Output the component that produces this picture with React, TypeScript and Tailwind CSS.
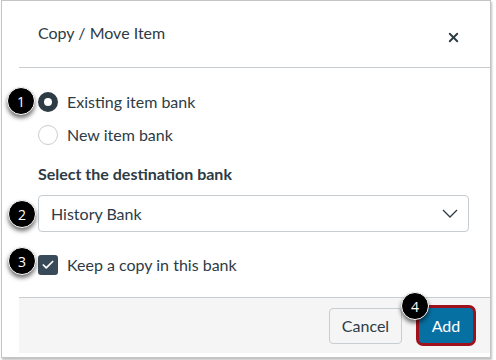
import { Check, X } from 'lucide-react'

function Badge({ n, className }: { n: number; className: string }) {
  return (
    <div
      className={`absolute w-[28px] h-[28px] rounded-full bg-black border border-white text-white text-[14px] flex items-center justify-center shadow-[0_3px_4px_rgba(0,0,0,0.55)] font-['Open_Sans',sans-serif] ${className}`}
    >
      {n}
    </div>
  )
}

function Radio({ checked, label }: { checked?: boolean; label: string }) {
  return (
    <label className="h-[33px] flex items-center gap-[9px]">
      <span
        className={
          checked
            ? 'w-[20px] h-[20px] rounded-full border-[6px] border-[#2d3b45] bg-white'
            : 'w-[20px] h-[20px] rounded-full border border-[#c7cdd1] bg-white'
        }
      />
      <span className="text-[16px]">{label}</span>
    </label>
  )
}

export default function App() {
  return (
    <div className="w-[496px] h-[360px] bg-white font-['Lato',sans-serif] text-[#2d3b45]">
      <div className="relative ml-[1px] w-[490px] h-[358px] border border-[#c4c4c4] shadow-[1px_2px_2px_rgba(0,0,0,0.25)] bg-white pl-[17px] flex flex-col">
        <div className="h-[67px] border-b border-[#c7cdd1] flex items-center justify-between pl-[19px] pr-[29px]">
          <h2 className="text-[16px] -mt-[2px]">Copy / Move Item</h2>
          <X size={15} strokeWidth={3} className="mt-[6px]" />
        </div>

        <div className="pl-[19px] pr-[21px] pt-[17px] flex flex-col">
          <Radio checked label="Existing item bank" />
          <Radio label="New item bank" />

          <div className="mt-[13px] text-[16px] font-bold leading-[20px]">Select the destination bank</div>

          <div className="mt-[11px] h-[37px] border border-[#c7cdd1] rounded-[4px] flex items-center justify-between pl-[12px] pr-[10px]">
            <span className="text-[16px]">History Bank</span>
            <svg width="16" height="9" viewBox="0 0 16 9" fill="none" stroke="#2d3b45" strokeWidth="1.3">
              <path d="M1 1l7 7 7-7" />
            </svg>
          </div>

          <label className="mt-[21px] flex items-center gap-[9px]">
            <span className="w-[20px] h-[20px] rounded-[3px] bg-[#394b58] flex items-center justify-center">
              <Check size={14} strokeWidth={3} className="text-white" />
            </span>
            <span className="text-[16px]">Keep a copy in this bank</span>
          </label>
        </div>

        <div className="mt-auto mb-[4px] h-[56px] bg-[#f5f5f5] border-t border-[#c7cdd1] flex items-center justify-end gap-[17px] pr-[17px]">
          <button className="w-[73px] h-[36px] rounded-[4px] border border-[#c7cdd1] bg-[#f5f5f5] text-[16px] text-[#2d3b45]">
            Cancel
          </button>
          <button className="w-[54px] h-[35px] rounded-[4px] bg-[#0770a2] text-white text-[16px] ring-[3px] ring-[#a0111c]">
            Add
          </button>
        </div>

        <Badge n={1} className="left-[5px] top-[86px]" />
        <Badge n={2} className="left-[6px] top-[199px]" />
        <Badge n={3} className="left-[6px] top-[246px]" />
        <Badge n={4} className="left-[399px] top-[291px]" />
      </div>
    </div>
  )
}
